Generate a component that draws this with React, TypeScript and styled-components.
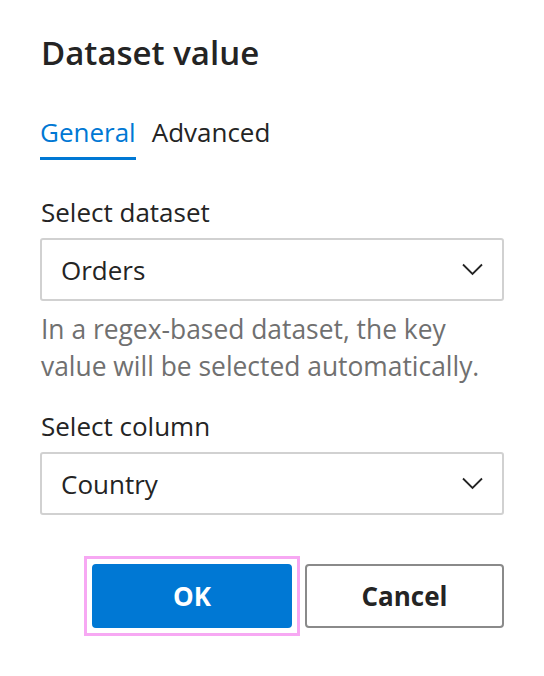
import styled, { createGlobalStyle } from 'styled-components';

const GlobalStyle = createGlobalStyle`
  body {
    margin: 0;
    background: #ffffff;
    font-family: 'Open Sans', 'Noto Sans', Arial, sans-serif;
    color: #242424;
  }
`;

const Dialog = styled.div`
  width: 544px;
  box-sizing: border-box;
  padding: 28px 40px 40px 40px;
  display: flex;
  flex-direction: column;
`;

const Title = styled.h2`
  margin: 0;
  font-size: 33px;
  font-weight: 600;
  line-height: 50px;
  color: #242424;
  padding-left: 1px;
`;

const TabList = styled.div`
  display: flex;
  gap: 16px;
  margin-top: 36px;
`;

const Tab = styled.button<{ $active?: boolean }>`
  border: none;
  background: none;
  padding: 0 0 7px 0;
  font-family: inherit;
  font-size: 26px;
  line-height: 36px;
  color: ${(p) => (p.$active ? '#0078d4' : '#242424')};
  border-bottom: 3px solid ${(p) => (p.$active ? '#0078d4' : 'transparent')};
  cursor: pointer;
`;

const Field = styled.div<{ $top: number }>`
  display: flex;
  flex-direction: column;
  margin-top: ${(p) => p.$top}px;
`;

const Label = styled.label`
  font-size: 26px;
  line-height: 36px;
  padding-left: 1px;
  margin-bottom: 8px;
`;

const Select = styled.div`
  height: 63px;
  box-sizing: border-box;
  border: 2px solid #d1d1d1;
  border-radius: 3px;
  display: flex;
  align-items: center;
  justify-content: space-between;
  padding: 0 19px 0 19px;
  font-size: 26px;
  color: #242424;
`;

const Hint = styled.p`
  margin: 10px 0 0 1px;
  font-size: 26.4px;
  line-height: 37px;
  color: #707070;
`;

const Actions = styled.div`
  display: flex;
  justify-content: flex-end;
  align-items: center;
  gap: 5px;
  margin-top: 41px;
`;

const FocusRing = styled.div`
  border: 3px solid #f7a8f3;
  padding: 5px;
  display: flex;
`;

const Button = styled.button<{ $primary?: boolean }>`
  width: ${(p) => (p.$primary ? 200 : 199)}px;
  height: 64px;
  box-sizing: border-box;
  border-radius: 4px;
  font-family: inherit;
  font-size: 26px;
  font-weight: 700;
  cursor: pointer;
  border: 2px solid ${(p) => (p.$primary ? '#0078d4' : '#8a8a8a')};
  background: ${(p) => (p.$primary ? '#0078d4' : '#ffffff')};
  color: ${(p) => (p.$primary ? '#ffffff' : '#242424')};
`;

function Chevron() {
  return (
    <svg width="21" height="13" viewBox="0 0 21 13" fill="none">
      <path d="M1 1.5 L10.5 11 L20 1.5" stroke="#242424" strokeWidth="1.8" />
    </svg>
  );
}

export default function App() {
  return (
    <>
      <GlobalStyle />
      <Dialog>
        <Title>Dataset value</Title>
        <TabList>
          <Tab $active>General</Tab>
          <Tab>Advanced</Tab>
        </TabList>
        <Field $top={34}>
          <Label>Select dataset</Label>
          <Select>
            <span>Orders</span>
            <Chevron />
          </Select>
          <Hint>
            In a regex-based dataset, the key
            <br />
            value will be selected automatically.
          </Hint>
        </Field>
        <Field $top={23}>
          <Label>Select column</Label>
          <Select>
            <span>Country</span>
            <Chevron />
          </Select>
        </Field>
        <Actions>
          <FocusRing>
            <Button $primary>OK</Button>
          </FocusRing>
          <Button>Cancel</Button>
        </Actions>
      </Dialog>
    </>
  );
}
